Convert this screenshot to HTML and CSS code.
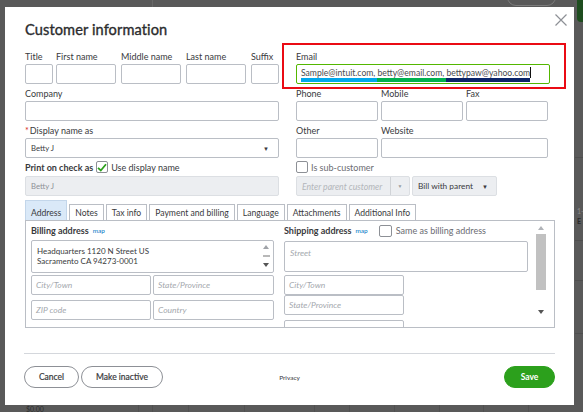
FILE: index.html
```html
<!DOCTYPE html>
<html lang="en">
<head>
<meta charset="utf-8">
<title>Customer information</title>
<link rel="stylesheet" href="styles.css">
</head>
<body>
<div class="backdrop">
  <span class="bg-pill"></span>
  <span class="bg-tile"></span>
  <span class="bg-vline" style="left:152px"></span>
  <span class="bg-text bg-right1">1-</span>
  <span class="bg-text bg-right2">E</span>
  <span class="bg-hline" style="top:157px"></span>
  <span class="bg-hline" style="top:240px"></span>
  <span class="bg-hline" style="top:280px"></span>
  <span class="bg-hline" style="top:333px"></span>
  <span class="bg-text bg-amount">$0.00</span>
  <span class="bg-gridline" style="left:138px"></span>
  <span class="bg-gridline" style="left:152px"></span>
  <span class="bg-gridline" style="left:188px"></span>
  <span class="bg-gridline" style="left:244px"></span>
  <span class="bg-gridline" style="left:314px"></span>
  <span class="bg-gridline" style="left:349px"></span>
  <span class="bg-gridline" style="left:394px"></span>
  <span class="bg-gridline" style="left:439px"></span>
  <span class="bg-gridline" style="left:483px"></span>
  <span class="bg-gridline" style="left:528px"></span>
</div>

<div class="modal">
  <button class="close" aria-label="Close">
    <svg width="12" height="12" viewBox="0 0 12 12"><path d="M0.5 0.5 L11.5 11.5 M11.5 0.5 L0.5 11.5" stroke="#8d9096" stroke-width="1.2" fill="none"/></svg>
  </button>
  <h1 class="title">Customer information</h1>

  <div class="form">
    <div class="col">
      <div class="name-row">
        <div class="field f-title"><label>Title</label><div class="input"></div></div>
        <div class="field f-wide"><label>First name</label><div class="input"></div></div>
        <div class="field f-wide"><label>Middle name</label><div class="input"></div></div>
        <div class="field f-wide"><label>Last name</label><div class="input"></div></div>
        <div class="field f-suffix"><label>Suffix</label><div class="input"></div></div>
      </div>
      <div class="field"><label>Company</label><div class="input"></div></div>
      <div class="field"><label><span class="req">*</span>Display name as</label>
        <div class="input select"><span class="val">Betty J</span><span class="caret">&#9660;</span></div>
      </div>
      <div class="check-row">
        <span class="strong">Print on check as</span>
        <span class="checkbox checked">
          <svg width="10" height="9" viewBox="0 0 10 9"><path d="M1 4.8 L3.8 7.5 L9 1.2" stroke="#2ca01c" stroke-width="1.8" fill="none"/></svg>
        </span>
        <span>Use display name</span>
      </div>
      <div class="input disabled"><span class="val muted">Betty J</span></div>
    </div>

    <div class="col">
      <div class="field"><label>Email</label>
        <div class="input email">
          <span class="seg seg-blue">Sample@intuit.com, </span><span class="seg seg-green">betty@email.com, </span><span class="seg seg-navy">bettypaw@yahoo.com</span><span class="cursor"></span>
        </div>
      </div>
      <div class="row3">
        <div class="field"><label>Phone</label><div class="input"></div></div>
        <div class="field"><label>Mobile</label><div class="input"></div></div>
        <div class="field"><label>Fax</label><div class="input"></div></div>
      </div>
      <div class="row2">
        <div class="field"><label>Other</label><div class="input"></div></div>
        <div class="field"><label>Website</label><div class="input"></div></div>
      </div>
      <div class="check-row">
        <span class="checkbox"></span>
        <span class="light">Is sub-customer</span>
      </div>
      <div class="parent-row">
        <div class="combo disabled">
          <span class="ph">Enter parent customer</span>
          <span class="combo-arrow">&#9660;</span>
        </div>
        <div class="input disabled bill"><span class="val">Bill with parent</span><span class="caret dark">&#9660;</span></div>
      </div>
    </div>
  </div>

  <div class="tabs">
    <span class="tab active">Address</span>
    <span class="tab">Notes</span>
    <span class="tab">Tax info</span>
    <span class="tab">Payment and billing</span>
    <span class="tab">Language</span>
    <span class="tab">Attachments</span>
    <span class="tab">Additional Info</span>
  </div>

  <div class="tab-body">
    <div class="addr">
      <div class="addr-head"><span class="strong">Billing address</span><span class="map">map</span></div>
      <div class="input textarea filled">
        <div class="ta-text">Headquarters 1120 N Street US<br>Sacramento CA 94273-0001</div>
        <div class="ta-scroll"><span class="tri up"></span><span class="ta-thumb"></span><span class="tri down"></span></div>
      </div>
      <div class="pair">
        <div class="input"><span class="ph">City/Town</span></div>
        <div class="input"><span class="ph">State/Province</span></div>
      </div>
      <div class="pair">
        <div class="input"><span class="ph">ZIP code</span></div>
        <div class="input"><span class="ph">Country</span></div>
      </div>
    </div>
    <div class="addr ship">
      <div class="addr-head"><span class="strong">Shipping address</span><span class="map">map</span><span class="checkbox"></span><span class="light">Same as billing address</span></div>
      <div class="input street"><span class="ph">Street</span></div>
      <div class="stack">
        <div class="input"><span class="ph">City/Town</span></div>
        <div class="input"><span class="ph">State/Province</span></div>
        <div class="input"></div>
      </div>
    </div>
    <div class="vscroll">
      <span class="tri up"></span>
      <span class="thumb"></span>
      <span class="tri down"></span>
    </div>
  </div>

  <div class="footer">
    <div class="actions-left">
      <button class="btn">Cancel</button>
      <button class="btn">Make inactive</button>
    </div>
    <span class="privacy">Privacy</span>
    <button class="btn save">Save</button>
  </div>
</div>

<div class="highlight"></div>
</body>
</html>
```

FILE: styles.css
```css
* { box-sizing: border-box; }
html, body { margin: 0; padding: 0; }
body {
  width: 583px;
  height: 412px;
  overflow: hidden;
  background: #595959;
  font-family: "Lato", "Open Sans", sans-serif;
  color: #393a3d;
  position: relative;
}

/* ---------- dimmed page behind the dialog ---------- */
.backdrop { position: absolute; inset: 0; }
.bg-pill {
  position: absolute; left: 507px; top: -12px; width: 49px; height: 18px;
  border: 1px solid #7c7c7c; border-radius: 9px;
}
.bg-tile {
  position: absolute; left: 577px; top: -4px; width: 12px; height: 26px;
  background: #1e4d1f; border-radius: 4px;
}
.bg-vline { position: absolute; top: 0; width: 1px; height: 7px; background: #676767; }
.bg-hline { position: absolute; left: 575px; width: 8px; height: 1px; background: #4e4e4e; }
.bg-gridline { position: absolute; top: 405px; width: 1px; height: 7px; background: #505050; }
.bg-text { position: absolute; font-size: 7px; color: #2e2e2e; line-height: 8px; }
.bg-right1 { left: 577px; top: 207px; color: #8a8a8a; }
.bg-right2 { left: 577px; top: 217px; font-weight: 700; color: #2a2a2a; }
.bg-amount { left: 26px; top: 405px; }

/* ---------- dialog ---------- */
.modal {
  position: absolute;
  left: 5px; top: 7px;
  width: 569px; height: 398px;
  background: #fff;
  padding: 0 19px 0 20px;
}
.close {
  position: absolute; right: 7px; top: 7px;
  width: 12px; height: 12px; padding: 0; border: 0; background: none;
  display: block;
}
.close svg { display: block; }
.title {
  margin: 11px 0 10px;
  height: 24px;
  font-size: 14.6px;
  line-height: 24px;
  font-weight: 400;
  -webkit-text-stroke: 0.35px #2b2c2e;
  color: #2b2c2e;
  letter-spacing: 0.1px;
}

.form {
  display: grid;
  grid-template-columns: 254px 254px;
  column-gap: 17px;
}
.col { display: flex; flex-direction: column; gap: 5px; }
.field { display: flex; flex-direction: column; }
.field label {
  font-size: 9px;
  line-height: 10px;
  height: 10px;
  margin-bottom: 2px;
  color: #393a3d;
  white-space: nowrap;
}
.req { color: #d52b1e; margin-right: 1px; }

.input {
  height: 20px;
  flex: none;
  border: 1px solid #babec5;
  border-radius: 2px;
  background: #fff;
  display: flex;
  align-items: center;
  padding: 0 5px;
  font-size: 7.7px;
  color: #393a3d;
  white-space: nowrap;
  overflow: hidden;
}
.input.disabled { background: #eceef1; border-color: #dcdfe3; }
.val { flex: 1; }
.muted { color: #8d9096; }
.caret { font-size: 6px; color: #393a3d; margin-right: 4px; }
.ph { font-style: italic; color: #a4a8ad; font-size: 8.5px; }

.name-row { display: flex; gap: 5px; }
.f-title { width: 28px; margin-right: -2px; }
.f-wide { width: 60px; }
.f-suffix { width: 28px; }

.row3 { display: grid; grid-template-columns: 82px 82px 82px; column-gap: 3px; }
.row2 { display: grid; grid-template-columns: 82px 167px; column-gap: 3px; }

.check-row {
  height: 12px;
  margin-top: -2px;
  display: flex; align-items: center; gap: 3px;
  font-size: 9px;
  white-space: nowrap;
}
.check-row + .input, .check-row + .parent-row { margin-top: -2px; }
.strong { font-weight: 700; color: #393a3d; }
.light { color: #6b6c72; }
.checkbox {
  width: 12px; height: 12px;
  border: 1px solid #8d9096;
  border-radius: 2px;
  background: #fff;
  display: inline-flex; align-items: center; justify-content: center;
  flex: none;
}

/* email field with coloured underlines */
.input.email {
  border-color: #53b700;
  align-items: flex-end;
  padding: 0 0 0 4px;
  font-size: 8.6px;
  color: #4a4b4e;
}
.seg { white-space: pre; border-bottom: 4px solid; line-height: 10px; margin-bottom: 1px; }
.seg-blue { border-color: #00a8ec; }
.seg-green { border-color: #00b04f; }
.seg-navy { border-color: #0a2468; }
.cursor { width: 1px; height: 11px; background: #111; align-self: center; margin-top: -3px; }

.parent-row { display: flex; gap: 2px; }
.combo {
  width: 114px; height: 20px;
  display: flex; align-items: center;
  border: 1px solid #dcdfe3; border-radius: 2px;
  background: #eceef1;
  padding-left: 5px;
  white-space: nowrap;
}
.combo .ph { flex: 1; color: #b3b6ba; font-size: 8.7px; }
.combo-arrow {
  width: 19px; height: 100%;
  border-left: 1px solid #d0d3d7;
  display: flex; align-items: center; justify-content: center;
  font-size: 5px; color: #9a9da2;
}
.input.bill { width: 85px; padding-left: 5px; font-size: 8.3px; color: #393a3d; }
.caret.dark { margin-right: 3px; }

/* ---------- tabs ---------- */
.tabs {
  margin-top: 4px;
  height: 20px;
  display: flex; align-items: flex-end; gap: 2px;
}
.tab {
  height: 16px;
  border: 1px solid #babec5;
  border-bottom: 0;
  padding: 0 5px;
  display: flex; align-items: center;
  font-size: 8.6px;
  color: #393a3d;
  white-space: nowrap;
}
.tab.active { height: 20px; background: #dae9f8; border-color: #c3d6ea; padding-top: 4px; }

.tab-body {
  height: 108px;
  border: 1px solid #babec5;
  display: grid;
  grid-template-columns: 243px 244px 10px;
  column-gap: 10px;
  padding-left: 5px;
  overflow: hidden;
}
.tab-body .vscroll { margin-left: -5px; }
.addr { display: flex; flex-direction: column; padding-top: 4px; overflow: hidden; }
.addr > * { flex: none; }
.addr-head {
  height: 11px;
  display: flex; align-items: center; gap: 3px;
  font-size: 9px; white-space: nowrap;
}
.map { color: #0077c5; font-size: 6.5px; margin-left: 1px; }
.ship .addr-head { height: 13px; margin-top: -1px; }
.ship .checkbox { width: 13px; height: 12px; margin-left: 8px; }
.ship .light { margin-left: 1px; }

.textarea { height: 33px; margin-top: 4px; padding: 0 0 0 5px; align-items: stretch; }
.ta-text { flex: 1; font-size: 8px; line-height: 10px; padding-top: 5px; color: #393a3d; }
.ta-scroll {
  width: 10px; margin-right: 2px;
  display: flex; flex-direction: column; align-items: center; justify-content: space-between;
  padding: 4px 0 5px;
}
.ta-thumb { width: 7px; height: 2px; background: #b8b8b8; }

.pair { display: grid; grid-template-columns: 120px 121px; column-gap: 2px; margin-top: 2px; }
.pair + .pair { margin-top: 5px; }
.pair .input, .stack .input { padding-left: 4px; }

.street { height: 31px; margin-top: 4px; align-items: flex-start; padding-top: 6px; }
.stack { display: flex; flex-direction: column; width: 120px; margin-top: 3px; }
.stack .input { height: 20px; }
.stack .input:nth-child(3) { margin-top: 5px; }

.vscroll {
  display: flex; flex-direction: column; align-items: center;
  padding-top: 5px;
}
.tri { width: 0; height: 0; border-left: 3px solid transparent; border-right: 3px solid transparent; }
.tri.up { border-bottom: 4px solid #7c7f84; }
.tri.down { border-top: 4px solid #555; }
.ta-scroll .tri.up { border-bottom-color: #a0a3a8; }
.vscroll .tri.up { border-bottom-color: #b0b3b8; }
.thumb { width: 10px; height: 56px; background: #c1c1c1; margin-top: 4px; }
.vscroll .tri.down { margin-top: 20px; }

/* ---------- footer ---------- */
.footer {
  margin-top: 25px;
  margin-left: -1px;
  border-top: 1px solid #d4d7dc;
  padding-top: 12px;
  display: flex; align-items: center; justify-content: space-between;
}
.actions-left { display: flex; gap: 2px; width: 255px; }
.btn {
  height: 22px;
  border: 1px solid #8d9096;
  border-radius: 11px;
  background: #fff;
  font-family: inherit;
  font-size: 8.5px;
  font-weight: 400;
  -webkit-text-stroke: 0.2px #393a3d;
  color: #393a3d;
  padding: 0 8px;
}
.actions-left .btn:first-child { width: 55px; }
.actions-left .btn:last-child { width: 82px; }
.privacy { font-size: 6.5px; color: #393a3d; margin-right: 204px; }
.save {
  width: 51px;
  background: #2ca01c; border-color: #2ca01c; color: #fff;
  font-weight: 700;
  -webkit-text-stroke: 0;
}

/* ---------- red annotation box ---------- */
.highlight {
  position: absolute;
  left: 282px; top: 43px;
  width: 284px; height: 46px;
  border: 2px solid #ea0b14;
}
```
